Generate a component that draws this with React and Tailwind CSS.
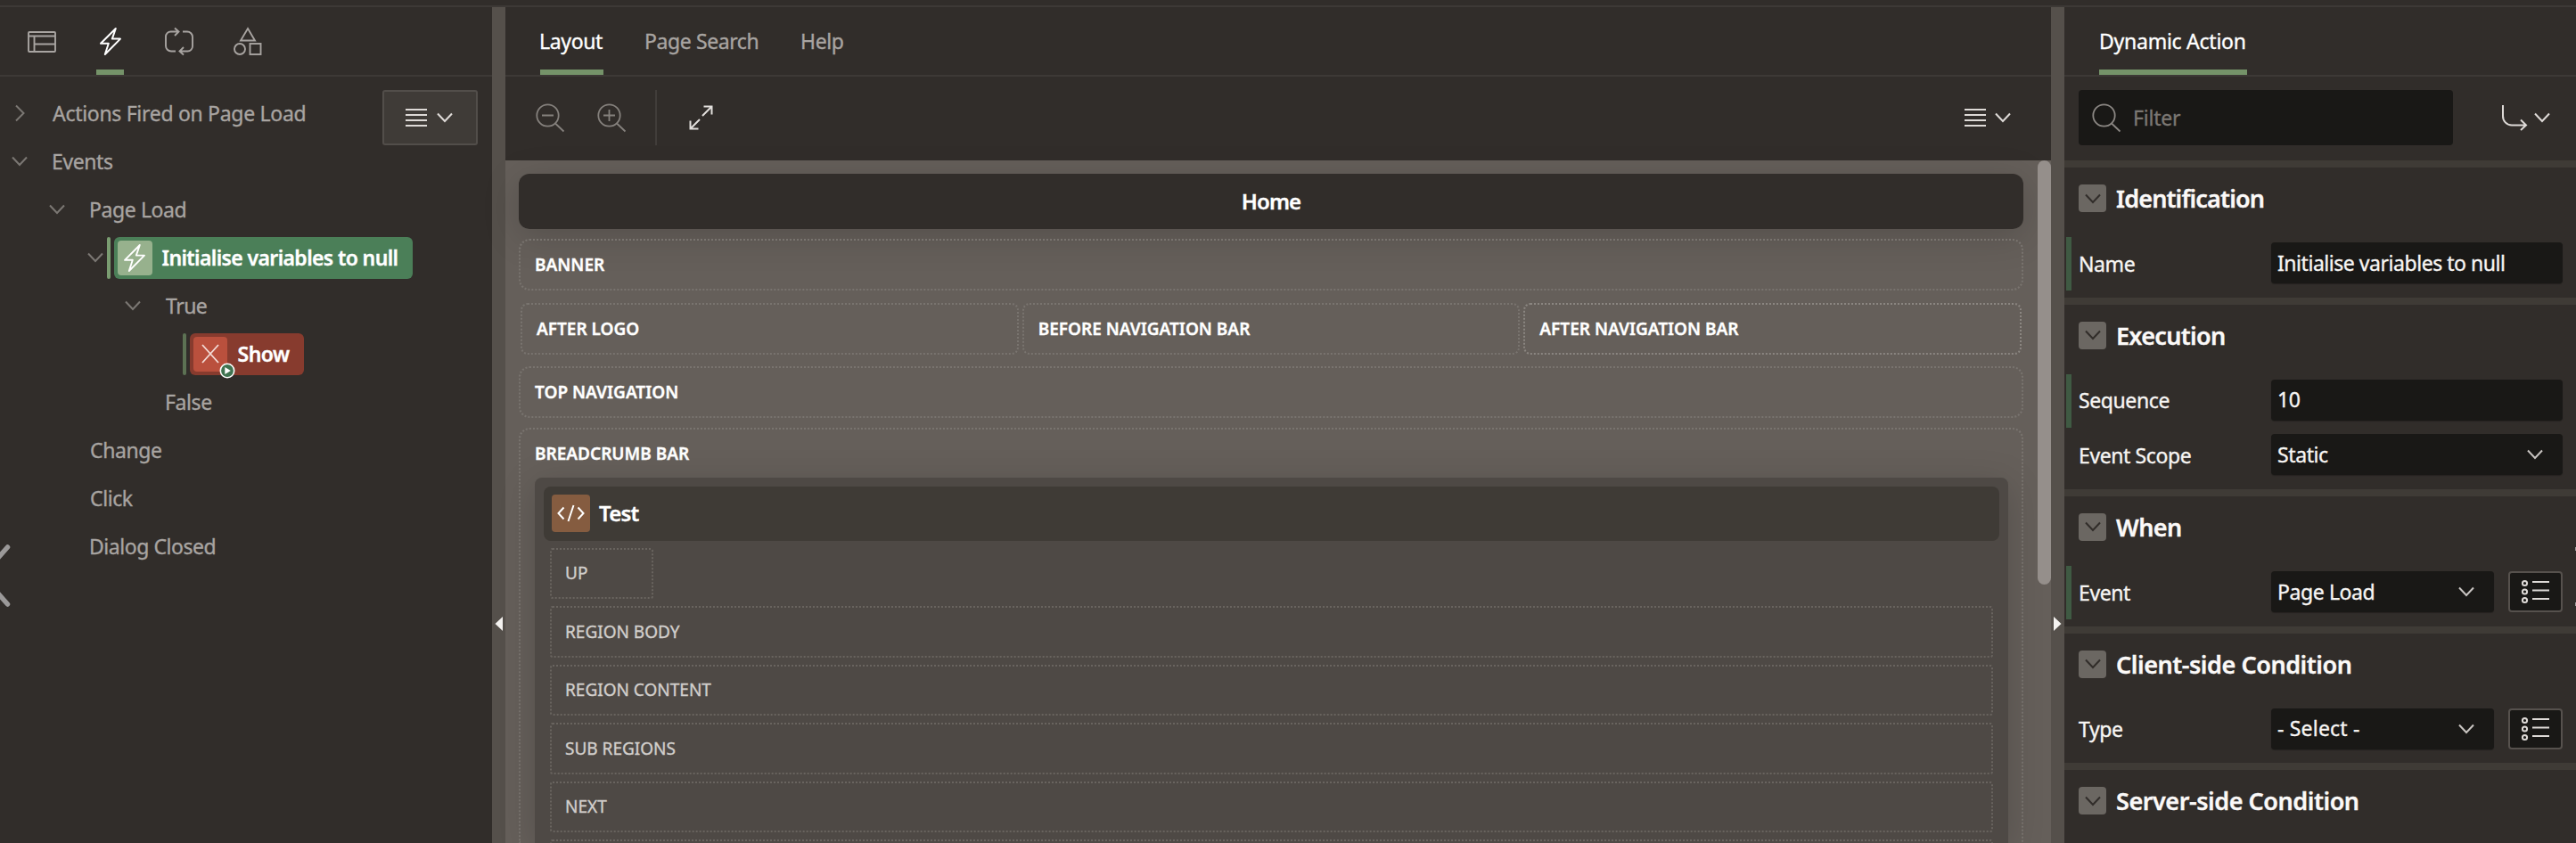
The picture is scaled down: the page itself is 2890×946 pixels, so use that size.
import React from "react";

/* ---------- icons ---------- */

const Svg = ({ w, h, sw = 2, className = "", children }) => (
  <svg
    width={w}
    height={h}
    viewBox={`0 0 ${w} ${h}`}
    fill="none"
    stroke="currentColor"
    strokeWidth={sw}
    className={`block shrink-0 overflow-visible ${className}`}
  >
    {children}
  </svg>
);

const ChevronDown = ({ className, sw = 2 }) => (
  <Svg w={18} h={10} sw={sw} className={className}>
    <path d="M1 .5 9 9 17 .5" />
  </Svg>
);
const ChevronRight = ({ className }) => (
  <Svg w={10} h={18} className={className}>
    <path d="M1 .5 9.5 9 1 17.5" />
  </Svg>
);
const PageIcon = () => (
  <Svg w={32} h={24} sw={1.9}>
    <rect x="1" y="1" width="30" height="22" rx="1" />
    <path d="M1 5.5H31M7.5 5.5V23M7.5 14.5H31" />
  </Svg>
);
const Bolt = ({ sw = 2 }) => (
  <Svg w={24} h={31} sw={sw}>
    <path strokeLinejoin="round" d="M17.8 1 1 17.8H9.8L5.8 30 23 12.6H13.8Z" />
  </Svg>
);
const LoopIcon = () => (
  <Svg w={32} h={31} sw={1.9}>
    <path d="M12 26.5H7A6 6 0 0 1 1 20.500V10A5.500 5.500 0 0 1 6.500 4.500H15M11 .5 15.500 4.500 11 9" />
    <path d="M20 4.500H25A6 6 0 0 1 31 10.500V21A5.500 5.500 0 0 1 25.500 26.500H17M21 22 16.500 26.500 21 30.500" />
  </Svg>
);
const ShapesIcon = () => (
  <Svg w={32} h={31} sw={1.9}>
    <path d="M16 1 24 14.500H8Z" />
    <circle cx="7" cy="24" r="6" />
    <rect x="18.500" y="18" width="12" height="12" />
  </Svg>
);
const ZoomIcon = ({ plus }) => (
  <Svg w={32} h={32} sw={1.8}>
    <circle cx="13.500" cy="13.500" r="12.200" />
    <path d="M22 22.500 31.500 31.500M7 13.500H20" />
    {plus && <path d="M13.500 7V20" />}
  </Svg>
);
const SearchIcon = () => (
  <Svg w={32} h={32} sw={1.8}>
    <circle cx="13.500" cy="13.500" r="12.200" />
    <path d="M22 22.500 31.500 31.500" />
  </Svg>
);
const ExpandIcon = () => (
  <Svg w={27} h={28} sw={2}>
    <path d="M15 12 25.500 1.500M16.500 1.500H25.500V10.500M12 16 1.500 26.500M1.500 17.500V26.500H10.500" />
  </Svg>
);
const MenuIcon = () => (
  <Svg w={24} h={20} sw={1.9}>
    <path d="M0 1H24M0 7H24M0 13H24M0 19H24" />
  </Svg>
);
const ReturnIcon = () => (
  <Svg w={28} h={28} sw={2}>
    <path d="M1 0V12A10 10 0 0 0 11 22.500H26.500M21 16.500 27 22.500 21 28" />
  </Svg>
);
const ListIcon = () => (
  <Svg w={31} h={28} sw={2}>
    <circle cx="3.500" cy="4.500" r="2.600" />
    <circle cx="3.500" cy="14" r="2.600" />
    <circle cx="3.500" cy="23.500" r="2.600" />
    <path d="M12 3H31M12 12.500H31M12 22H31" />
  </Svg>
);
const CodeIcon = () => (
  <Svg w={31} h={20} sw={2}>
    <path d="M7.500 3.500 1.500 10 7.500 16.500M23.500 3.500 29.500 10 23.500 16.500M18.500 1 12.500 19" />
  </Svg>
);
const CrossIcon = () => (
  <Svg w={20} h={20} sw={1.8}>
    <path d="M1 0 19 20M19 0 1 20" />
  </Svg>
);

/* ---------- left pane ---------- */

const TreeRow = ({ indent, toggle, children }) => (
  <div className={`flex h-[54px] items-center ${indent}`}>
    <div className="flex w-[18px] shrink-0 justify-center text-[#7b7773]">
      {toggle === "open" && <ChevronDown />}
      {toggle === "closed" && <ChevronRight />}
    </div>
    {children}
  </div>
);

const Label = ({ className, children }) => (
  <span className={`whitespace-nowrap text-[23px] text-[#a8a4a1] ${className}`}>{children}</span>
);

function LeftPane() {
  return (
    <section className="relative flex w-[552px] shrink-0 flex-col overflow-hidden">
      <nav className="flex h-[78px] shrink-0 items-stretch gap-[46px] border-b-2 border-[#3d3936] pl-[31px] text-[#a8a4a1]">
        <div className="flex w-[31px] justify-center pt-[27px]"><PageIcon /></div>
        <div className="flex w-[31px] justify-center border-b-[6px] border-[#759369] pt-[23px] text-white"><Bolt /></div>
        <div className="flex w-[31px] justify-center pt-[23px]"><LoopIcon /></div>
        <div className="flex w-[31px] justify-center pt-[23px]"><ShapesIcon /></div>
      </nav>
      <div className="flex">
        <div className="w-[429px] pt-[14px]">
          <TreeRow indent="pl-[13px]" toggle="closed"><Label className="ml-[28px] tracking-[-0.3px]">Actions Fired on Page Load</Label></TreeRow>
          <TreeRow indent="pl-[13px]" toggle="open"><Label className="ml-[27px] tracking-[-0.4px]">Events</Label></TreeRow>
          <TreeRow indent="pl-[55px]" toggle="open"><Label className="ml-[27px] tracking-[-0.4px]">Page Load</Label></TreeRow>
          <TreeRow indent="pl-[98px]" toggle="open">
            <i className="ml-1 h-[47px] w-1 shrink-0 rounded-sm bg-[#7a9d71]" />
            <div className="ml-1 flex h-[47px] w-[335px] shrink-0 items-center rounded-md bg-[#4b7f58] pl-1">
              <div className="flex h-[39px] w-[38.5px] items-center justify-center rounded bg-[#97b18d] text-white"><Bolt sw={1.9} /></div>
              <span className="ml-[11px] whitespace-nowrap text-[23px] font-semibold tracking-[-0.62px] text-white">Initialise variables to null</span>
            </div>
          </TreeRow>
          <TreeRow indent="pl-[140px]" toggle="open"><Label className="ml-[28px] tracking-[-0.5px]">True</Label></TreeRow>
          <TreeRow indent="pl-[183px]">
            <i className="ml-1 h-[47px] w-1 shrink-0 rounded-sm bg-[#5c7153]" />
            <div className="ml-1 flex h-[47px] w-32 items-center rounded-md bg-[#873b2e] pl-[3.5px]">
              <div className="relative flex h-[39px] w-[38.5px] items-center justify-center rounded bg-[#ba503d] text-[#f3dcd7]">
                <CrossIcon />
                <svg width="18" height="18" viewBox="0 0 18 18" className="absolute -right-[8.500px] -bottom-[8px]">
                  <circle cx="9" cy="9" r="7.700" fill="#3f7350" stroke="#fff" strokeWidth="1.600" />
                  <path d="M6.300 5 12.800 9 6.300 13Z" fill="#fff" />
                </svg>
              </div>
              <span className="ml-[11.5px] text-[23px] font-semibold tracking-[-0.5px] text-white">Show</span>
            </div>
          </TreeRow>
          <TreeRow indent="pl-[140px]"><Label className="ml-[27px] tracking-[-0.4px]">False</Label></TreeRow>
          <TreeRow indent="pl-[55px]"><Label className="ml-[28px] tracking-[-0.4px]">Change</Label></TreeRow>
          <TreeRow indent="pl-[55px]"><Label className="ml-[28px] tracking-[-0.4px]">Click</Label></TreeRow>
          <TreeRow indent="pl-[55px]"><Label className="ml-[27px] tracking-[-0.45px]">Dialog Closed</Label></TreeRow>
        </div>
        <button className="mt-[15px] flex h-[62px] w-[107px] items-center gap-[11px] rounded-[3px] border-2 border-[#524e4a] bg-[#3f3b37] pl-6 text-[#dedad7]">
          <MenuIcon />
          <ChevronDown />
        </button>
      </div>
      <svg width="12" height="74" viewBox="0 0 12 74" fill="none" stroke="#9b9999" strokeWidth="5.500" strokeLinecap="round" className="absolute top-[601px] left-0">
        <path d="M8.500 5-20 37 8.500 69" />
      </svg>
    </section>
  );
}

/* ---------- splitter ---------- */

const Splitter = ({ dir }) => (
  <div className="flex w-[15px] shrink-0 flex-col items-center bg-[#55504b] pt-[684px]">
    <svg width="9" height="16" viewBox="0 0 9 16" fill="#f4f2f0">
      {dir === "left" ? <path d="M9 0V16L.5 8Z" /> : <path d="M0 0V16L8.500 8Z" />}
    </svg>
  </div>
);

/* ---------- centre pane ---------- */

const Slot = ({ className, children }) => (
  <div className={`flex h-[58px] items-center border-2 border-dotted pl-4 text-[19px] font-semibold whitespace-nowrap text-white ${className}`}>
    {children}
  </div>
);

const SubSlot = ({ className = "", children }) => (
  <div className={`flex h-[57.5px] shrink-0 items-center rounded-[3px] border-2 border-dotted border-[#69645f] pl-[15px] text-[19px] whitespace-nowrap text-[#d2cfcc] ${className}`}>
    {children}
  </div>
);

function CenterPane() {
  return (
    <section className="flex w-[1734px] shrink-0 flex-col">
      <nav className="flex h-[78px] shrink-0 border-b-2 border-[#3d3936] pl-[39px] text-[23px] whitespace-nowrap text-[#a8a4a1]">
        <div className="w-[71px] border-b-[6px] border-[#759369] pt-[21px] tracking-[-0.35px] text-white"><span className="-ml-px">Layout</span></div>
        <div className="ml-[46px] w-[129px] pt-[21px] tracking-[-0.4px]">Page Search</div>
        <div className="ml-[46px] pt-[21px] tracking-[-0.4px]">Help</div>
      </nav>
      <div className="flex h-[94px] shrink-0 items-start justify-between pt-[15px]">
        <div className="flex h-[62px] items-center text-[#85817d]">
          <div className="ml-[34px]"><ZoomIcon /></div>
          <div className="ml-[37px]"><ZoomIcon plus /></div>
          <div className="ml-[33px] h-[62px] w-[2px] bg-[#413d3a]" />
          <div className="ml-[36px] text-[#e2dfdc]"><ExpandIcon /></div>
        </div>
        <div className="mr-[45px] flex h-[62px] items-center gap-[10px] text-[#dedad7]">
          <MenuIcon />
          <ChevronDown />
        </div>
      </div>
      <div className="flex min-h-0 flex-1 bg-[#655f5a]">
        <div className="flex w-[1719px] flex-col pt-[15px] pr-4 pl-[15px]">
          <div className="flex h-[62px] shrink-0 items-center justify-center rounded-xl bg-[#312d2a] text-[24px] font-semibold tracking-[-0.9px] text-white shadow-[0_8px_40px_rgba(0,0,0,0.17)]">Home</div>
          <Slot className="mt-[11px] shrink-0 rounded-xl border-[#79746f]">BANNER</Slot>
          <div className="mx-[2px] mt-[14px] grid shrink-0 grid-cols-3 gap-1">
            <Slot className="rounded-lg border-[#79746f]">AFTER LOGO</Slot>
            <Slot className="rounded-lg border-[#79746f]">BEFORE NAVIGATION BAR</Slot>
            <Slot className="rounded-lg border-[#8b8681]">AFTER NAVIGATION BAR</Slot>
          </div>
          <Slot className="mt-[13px] shrink-0 rounded-xl border-[#79746f]">TOP NAVIGATION</Slot>
          <div className="mt-[11px] flex min-h-0 flex-1 flex-col rounded-t-xl border-2 border-b-0 border-dotted border-[#79746f] px-[15px]">
            <div className="flex h-[54px] shrink-0 items-center pl-px text-[19px] font-semibold text-white">BREADCRUMB BAR</div>
            <div className="ml-px flex min-h-0 flex-1 flex-col rounded-t-lg bg-[#4e4945] px-[10px] pt-[9.5px] shadow-[0_8px_40px_rgba(0,0,0,0.17)]">
              <div className="flex h-[61px] shrink-0 items-center rounded-lg bg-[#3f3b36] pl-[9px]">
                <div className="flex h-[42px] w-[43px] items-center justify-center rounded bg-[#855c40] text-white"><CodeIcon /></div>
                <span className="ml-[10px] text-[24px] leading-[30px] font-semibold tracking-[-0.8px] text-white">Test</span>
              </div>
              <div className="flex min-h-0 flex-1 flex-col gap-2 overflow-hidden px-[7px] pt-2">
                <SubSlot className="w-[116px]">UP</SubSlot>
                <SubSlot>REGION BODY</SubSlot>
                <SubSlot>REGION CONTENT</SubSlot>
                <SubSlot>SUB REGIONS</SubSlot>
                <SubSlot>NEXT</SubSlot>
                <SubSlot />
              </div>
            </div>
          </div>
        </div>
        <div className="w-[15px]"><div className="h-[476px] rounded-full bg-[#958f8b]" /></div>
      </div>
    </section>
  );
}

/* ---------- right pane ---------- */

const Group = ({ title, track, children }) => (
  <div className="shrink-0 border-t-8 border-[#3f3b36] pb-[6.2px]">
    <div className="flex h-[78px] items-start pt-[19px] pl-4">
      <div className="flex h-[31px] w-[31px] items-center justify-center rounded bg-[#6b6762] text-[#312d2a]"><ChevronDown /></div>
      <h2 className={`ml-[11px] h-[31px] text-[27px] leading-[31px] font-semibold whitespace-nowrap text-[#fbf9f8] ${track}`}>{title}</h2>
    </div>
    {children}
  </div>
);

const Field = ({ label, value, changed, select, list, track = "tracking-[-0.4px]" }) => (
  <div className="flex h-[61.5px] items-start">
    <div className={`ml-[2px] h-[60px] w-[6px] ${changed ? "bg-[#3f5a43]" : ""}`} />
    <div className="ml-2 flex h-[60px] w-[216px] items-center text-[23px] tracking-[-0.4px] text-[#f7f5f3]">{label}</div>
    <div className={`mt-[6px] flex h-[46px] items-center justify-between rounded bg-[#191816] pr-[22px] pl-[7px] text-[23px] whitespace-nowrap text-[#f7f5f3] shadow-[0_1px_1px_rgba(0,0,0,0.25)] ${list ? "w-[250px]" : "w-[327px]"} ${track}`}>
      <span>{value}</span>
      {select && <ChevronDown className="text-[#c9c5c2]" />}
    </div>
    {list && (
      <div className="mt-[6px] ml-4 flex h-[46px] w-[61px] items-center justify-center rounded border-2 border-[#56514d] bg-[#191816] text-[#dedad7]"><ListIcon /></div>
    )}
  </div>
);

function RightPane() {
  return (
    <section className="relative flex min-w-0 flex-1 flex-col overflow-hidden">
      <nav className="flex h-[78px] shrink-0 border-b-2 border-[#3d3936] pl-[39px] text-[23px] whitespace-nowrap text-white">
        <div className="w-[166px] border-b-[6px] border-[#759369] pt-[21px] tracking-[-0.25px]">Dynamic Action</div>
      </nav>
      <div className="flex h-[94px] shrink-0 items-start pt-[15px] pl-4">
        <div className="flex h-[62px] w-[420px] items-center gap-[14px] rounded bg-[#191816] pl-[15px] text-[#8b8783]">
          <SearchIcon />
          <span className="text-[23px] tracking-[-0.2px] text-[#7b7773]">Filter</span>
        </div>
        <div className="ml-[55px] flex h-[62px] items-center gap-2 text-[#dedad7]">
          <ReturnIcon />
          <ChevronDown />
        </div>
      </div>
      <Group title="Identification" track="tracking-[-0.85px]">
        <Field label="Name" value="Initialise variables to null" changed track="tracking-[-0.46px]" />
      </Group>
      <Group title="Execution" track="tracking-[-0.7px]">
        <Field label="Sequence" value="10" changed />
        <Field label="Event Scope" value="Static" select />
      </Group>
      <Group title="When" track="tracking-[-0.6px]">
        <Field label="Event" value="Page Load" changed select list />
      </Group>
      <Group title="Client-side Condition" track="tracking-[-0.45px]">
        <Field label="Type" value="- Select -" select list track="tracking-[0.2px]" />
      </Group>
      <Group title="Server-side Condition" track="tracking-[-0.45px]" />
      <i className="absolute top-[606px] -right-px h-[4px] w-[2px] bg-[#9b9999]" />
      <i className="absolute top-[668px] -right-px h-[4px] w-[2px] bg-[#9b9999]" />
    </section>
  );
}

export default function App() {
  return (
    <div className="flex h-[946px] w-[2890px] flex-col overflow-hidden bg-[#312d2a] font-['Noto_Sans',sans-serif] [-webkit-text-stroke:0.35px]">
      <div className="h-2 shrink-0 border-b-2 border-[#3d3936]" />
      <main className="flex min-h-0 flex-1">
        <LeftPane />
        <Splitter dir="left" />
        <CenterPane />
        <Splitter dir="right" />
        <RightPane />
      </main>
    </div>
  );
}
